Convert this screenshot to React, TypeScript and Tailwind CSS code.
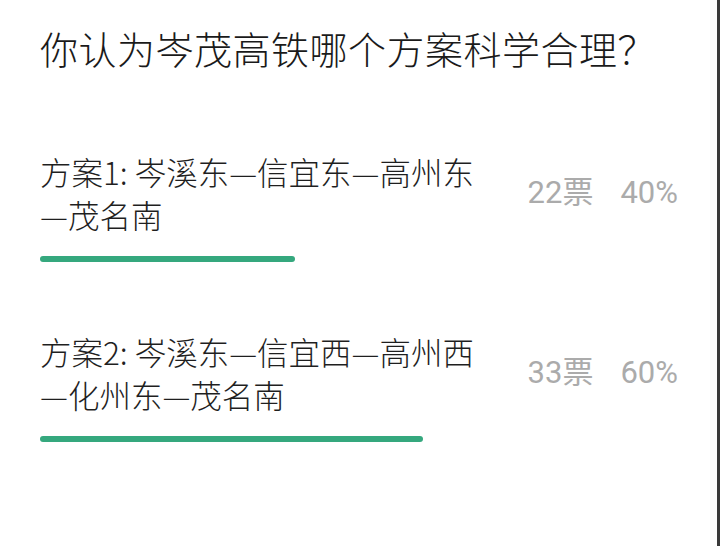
import React from 'react';

interface PollOption {
  lines: string[];
  votes: number;
  percent: number;
}

const options: PollOption[] = [
  { lines: ['方案1: 岑溪东—信宜东—高州东', '—茂名南'], votes: 22, percent: 40 },
  { lines: ['方案2: 岑溪东—信宜西—高州西', '—化州东—茂名南'], votes: 33, percent: 60 },
];

const cjk = { fontFamily: '"Noto Sans CJK SC", "Noto Sans", sans-serif' };
const latin = { fontFamily: 'Roboto, "Noto Sans CJK SC", sans-serif' };

const OptionRow: React.FC<{ option: PollOption }> = ({ option }) => {
  return (
    <div>
      <div className="flex items-center justify-between">
        <p className="text-[31.5px] leading-[43px] font-light text-[#1f1f1f] whitespace-nowrap" style={cjk}>
          {option.lines.map((line, i) => (
            <span key={i} className="block">
              {line}
            </span>
          ))}
        </p>
        <div className="flex items-center gap-[27px] text-[31px] text-[#ababab]" style={latin}>
          <span>{option.votes}票</span>
          <span>{option.percent}%</span>
        </div>
      </div>
      <div className="mt-5 h-[6px] w-[638px]">
        <div className="h-full rounded-full bg-[#35a87e]" style={{ width: `${option.percent}%` }} />
      </div>
    </div>
  );
};

export default function App() {
  return (
    <div
      className="w-[720px] h-[546px] bg-white border-r-[3px] border-[#3a3a3a] pl-10 pr-[39px] pt-6 overflow-hidden"
      style={cjk}
    >
      <h1 className="text-[38px] leading-[48px] font-light text-[#1a1a1a] tracking-[0.5px]">
        你认为岑茂高铁哪个方案科学合理？
      </h1>
      <div className="mt-[78px] flex flex-col gap-[68px]">
        {options.map((o) => (
          <OptionRow key={o.percent} option={o} />
        ))}
      </div>
    </div>
  );
}
